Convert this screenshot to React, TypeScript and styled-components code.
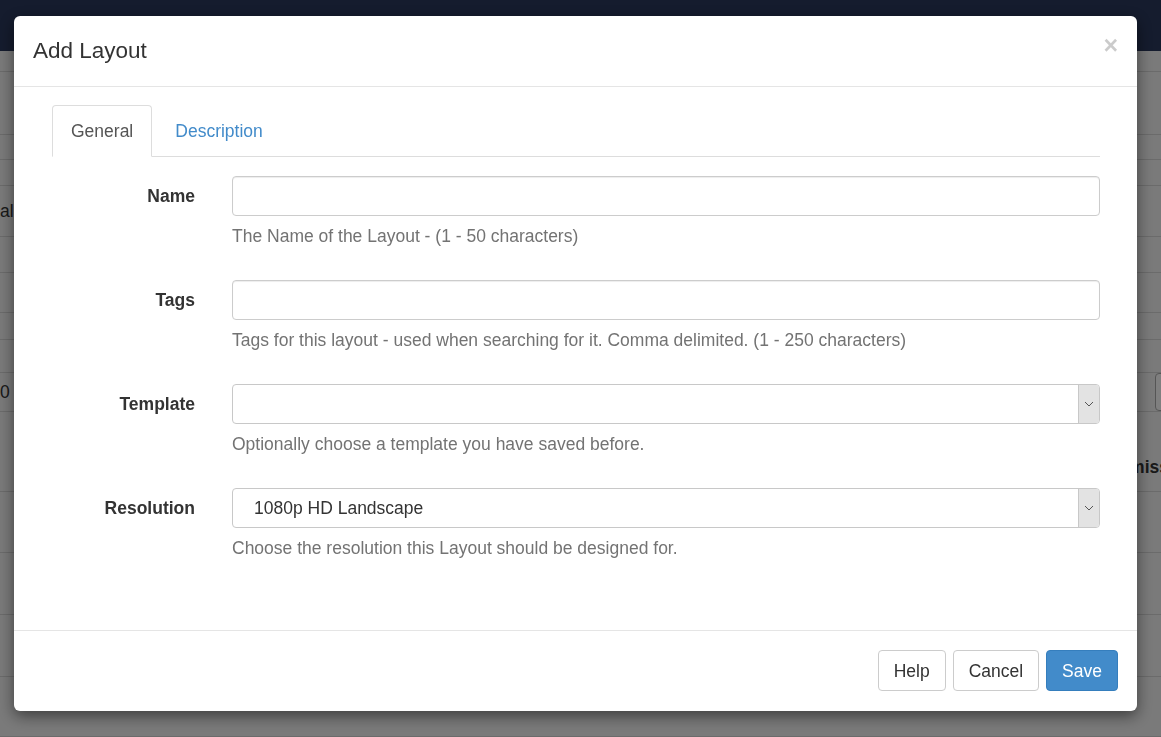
import React from 'react'
import styled, { createGlobalStyle } from 'styled-components'

const GlobalStyle = createGlobalStyle`
  html, body {
    margin: 0;
    padding: 0;
    height: 100%;
    overflow: hidden;
  }
  body {
    font-family: "Liberation Sans", Arial, Helvetica, sans-serif;
    font-size: 17.5px;
    color: #333;
    background: #f5f5f5;
  }
  * {
    box-sizing: border-box;
  }
`

type BgRow = { h: number; left?: string; box?: boolean; head?: string }

// rows of the page behind the dialog
const pageRows: BgRow[] = [
  { h: 21 },
  { h: 63 },
  { h: 25 },
  { h: 26 },
  { h: 51, left: 'al' },
  { h: 36 },
  { h: 40 },
  { h: 27 },
  { h: 33 },
  { h: 39, left: '0', box: true },
  { h: 80, head: 'Permiss' },
  { h: 61 },
  { h: 62 },
  { h: 62 },
  { h: 60 }
]

const fields = [
  { label: 'Name', help: 'The Name of the Layout - (1 - 50 characters)', kind: 'input' },
  {
    label: 'Tags',
    help: 'Tags for this layout - used when searching for it. Comma delimited. (1 - 250 characters)',
    kind: 'input'
  },
  { label: 'Template', help: 'Optionally choose a template you have saved before.', kind: 'select' },
  {
    label: 'Resolution',
    help: 'Choose the resolution this Layout should be designed for.',
    kind: 'select',
    value: '1080p HD Landscape'
  }
]

const App: React.FC = () => {
  return (
    <>
      <GlobalStyle />
      <Page>
        <TopNav />
        {pageRows.map((r, i) => (
          <PageRow key={i} style={{ height: r.h }}>
            <PageText>{r.left}</PageText>
            {r.box && <PageBox />}
            {r.head && <PageHead>{r.head}</PageHead>}
          </PageRow>
        ))}
      </Page>
      <Backdrop />
      <Modal>
        <Header>
          <Title>Add Layout</Title>
          <Close>×</Close>
        </Header>
        <Body>
          <Tabs>
            <Tab $active>General</Tab>
            <Tab>Description</Tab>
          </Tabs>
          <Form>
            {fields.map((f) => (
              <Group key={f.label}>
                <Label>{f.label}</Label>
                <Control>
                  {f.kind === 'input' ? (
                    <TextInput />
                  ) : (
                    <Select>
                      <SelectValue>{f.value}</SelectValue>
                      <Arrow>
                        <svg width="10" height="6" viewBox="0 0 10 6">
                          <path d="M1 1l4 4 4-4" fill="none" stroke="#555" strokeWidth="1" />
                        </svg>
                      </Arrow>
                    </Select>
                  )}
                  <Help>{f.help}</Help>
                </Control>
              </Group>
            ))}
          </Form>
        </Body>
        <Footer>
          <Button>Help</Button>
          <Button>Cancel</Button>
          <Button $primary>Save</Button>
        </Footer>
      </Modal>
    </>
  )
}

export default App

const Page = styled.div`
  display: flex;
  flex-direction: column;
  height: 100vh;
`
const TopNav = styled.div`
  height: 51px;
  flex: none;
  background: #2a385c;
`
const PageRow = styled.div`
  flex: none;
  display: flex;
  align-items: center;
  justify-content: space-between;
  border-bottom: 1px solid #d6d6d6;
`
const PageText = styled.span`
  color: #333;
`
const PageBox = styled.div`
  width: 30px;
  height: 38px;
  margin-right: -24px;
  border: 1px solid #aaa;
  border-radius: 4px;
  background: #fff;
`
const PageHead = styled.span`
  font-weight: 700;
  margin-top: 32px;
  margin-right: -8px;
  color: #333;
`
const Backdrop = styled.div`
  position: fixed;
  inset: 0;
  background: rgba(0, 0, 0, 0.5);
`
const Modal = styled.div`
  position: fixed;
  left: 14px;
  top: 16px;
  width: 1123px;
  background: #fff;
  border-radius: 6px;
  box-shadow: 0 5px 15px rgba(0, 0, 0, 0.5);
  display: flex;
  flex-direction: column;
`
const Header = styled.div`
  display: flex;
  align-items: flex-start;
  justify-content: space-between;
  padding: 18px 19px;
  border-bottom: 1px solid #e5e5e5;
`
const Title = styled.h4`
  margin: 0;
  font-size: 22.5px;
  font-weight: 400;
  line-height: 34px;
  color: #333;
`
const Close = styled.span`
  font-size: 25px;
  font-weight: 700;
  line-height: 20px;
  color: #000;
  opacity: 0.2;
  margin-top: 1px;
`
const Body = styled.div`
  padding: 18px 37px 38px 38px;
`
const Tabs = styled.div`
  display: flex;
  border-bottom: 1px solid #ddd;
  height: 52px;
`
const Tab = styled.div<{ $active?: boolean }>`
  padding: 13px 18px;
  margin-right: 4px;
  line-height: 24px;
  height: 52px;
  border: 1px solid ${(p) => (p.$active ? '#ddd' : 'transparent')};
  border-bottom-color: ${(p) => (p.$active ? '#fff' : 'transparent')};
  border-radius: 4px 4px 0 0;
  background: ${(p) => (p.$active ? '#fff' : 'transparent')};
  color: ${(p) => (p.$active ? '#555' : '#428bca')};
`
const Form = styled.div`
  padding-top: 19px;
  display: flex;
  flex-direction: column;
`
const Group = styled.div`
  display: grid;
  grid-template-columns: 143px 1fr;
  column-gap: 37px;
  margin-bottom: 32px;
`
const Label = styled.label`
  text-align: right;
  font-weight: 700;
  padding-top: 8px;
  line-height: 24px;
`
const Control = styled.div`
  display: flex;
  flex-direction: column;
`
const TextInput = styled.div`
  height: 40px;
  border: 1px solid #ccc;
  border-radius: 4px;
  box-shadow: inset 0 1px 1px rgba(0, 0, 0, 0.075);
  background: #fff;
`
const Select = styled.div`
  height: 40px;
  border: 1px solid #c8c8c8;
  border-radius: 4px;
  display: flex;
  align-items: stretch;
  background: #fff;
  overflow: hidden;
`
const SelectValue = styled.span`
  flex: 1;
  padding-left: 21px;
  line-height: 38px;
  color: #333;
`
const Arrow = styled.span`
  width: 21px;
  display: flex;
  align-items: center;
  justify-content: center;
  background: #e3e3e3;
  border-left: 1px solid #c8c8c8;
`
const Help = styled.span`
  margin-top: 8px;
  line-height: 24px;
  color: #737373;
`
const Footer = styled.div`
  display: flex;
  justify-content: flex-end;
  gap: 7px;
  padding: 19px 19px 20px;
  border-top: 1px solid #e5e5e5;
`
const Button = styled.button<{ $primary?: boolean }>`
  font-family: inherit;
  font-size: 17.5px;
  line-height: 24px;
  padding: 7.5px 15px;
  border-radius: 4px;
  border: 1px solid ${(p) => (p.$primary ? '#357ebd' : '#ccc')};
  background: ${(p) => (p.$primary ? '#428bca' : '#fff')};
  color: ${(p) => (p.$primary ? '#fff' : '#333')};
`
